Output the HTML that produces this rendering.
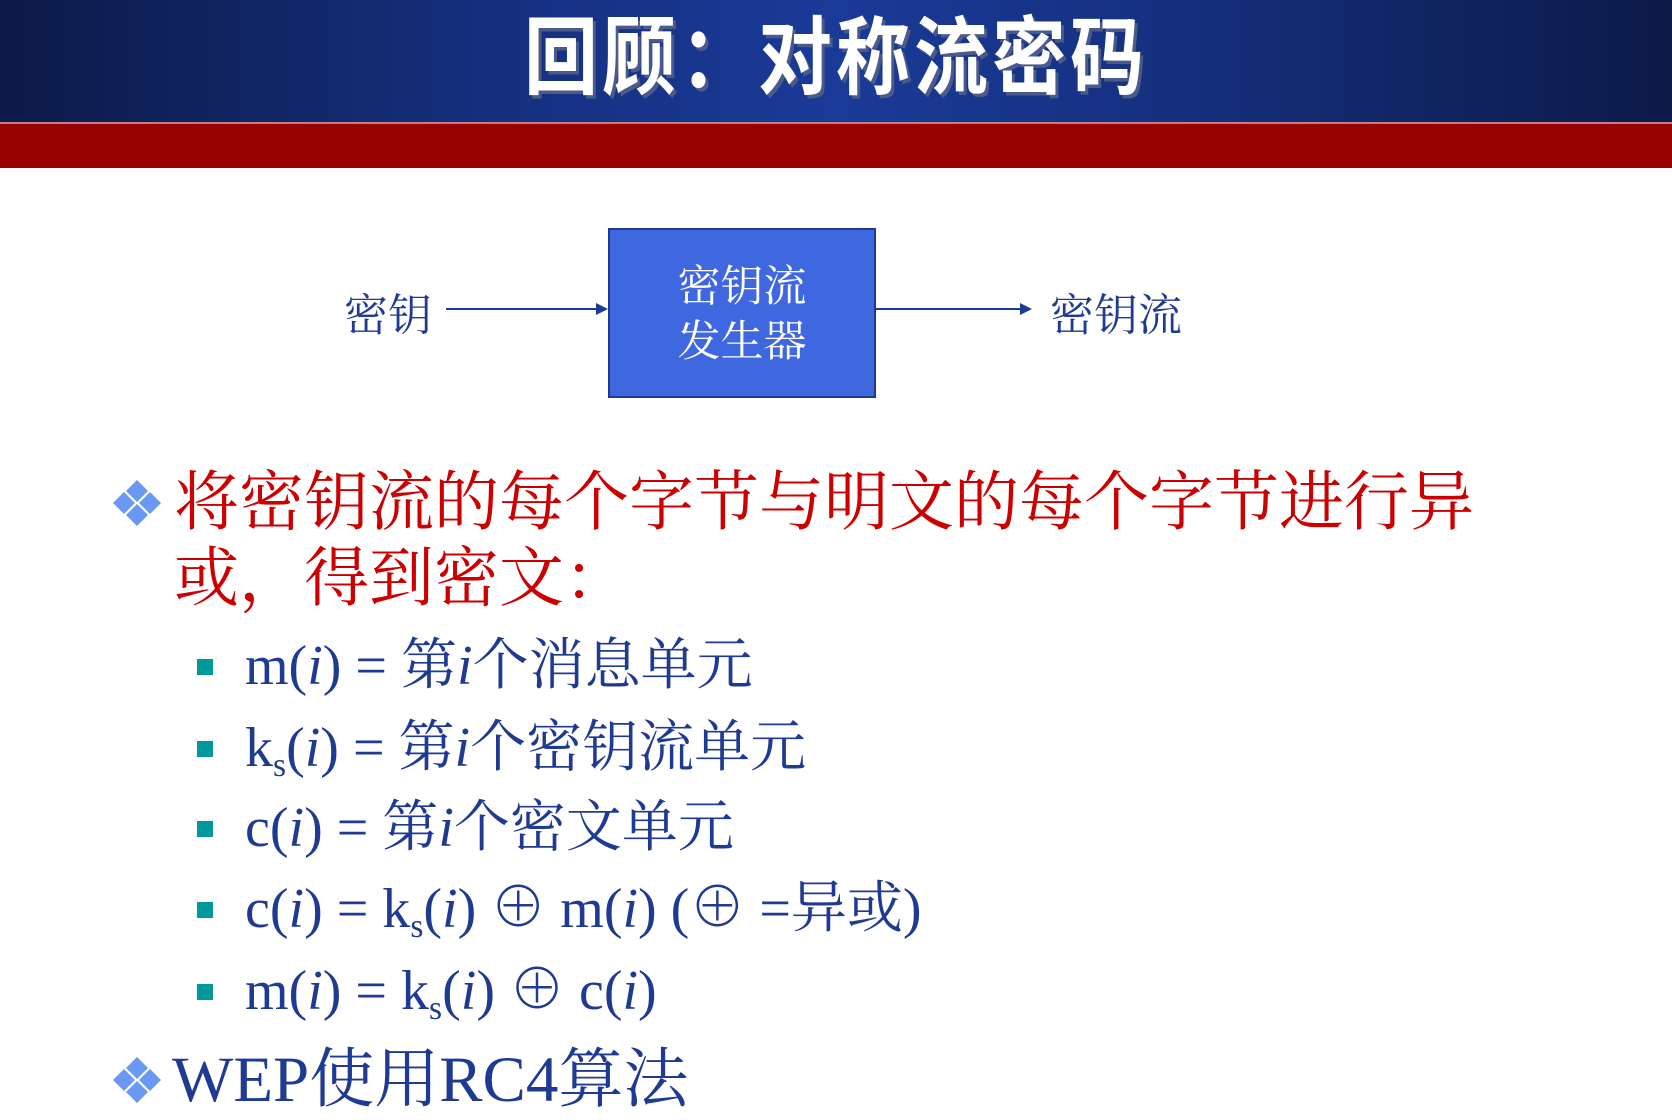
<!DOCTYPE html>
<html><head><meta charset="utf-8"><style>
html,body{margin:0;padding:0;}
body{width:1672px;height:1120px;position:relative;overflow:hidden;background:#fff;font-family:"Liberation Serif","Noto Serif CJK SC",serif;}
.hdr{position:absolute;left:0;top:0;width:1672px;height:122px;background:linear-gradient(90deg,#0c1a48 0%,#16307f 30%,#1a3a98 50%,#16307f 70%,#0c1a48 100%);}
.title{position:absolute;left:0;width:1672px;top:2px;text-align:center;color:#fff;font-size:74px;font-weight:bold;font-family:"Noto Sans CJK SC","WenQuanYi Zen Hei",sans-serif;line-height:100px;text-shadow:3px 3px 0 #4a5a8a;letter-spacing:4px;transform:scaleY(1.15);transform-origin:50% 50%;}
.red{position:absolute;left:0;top:122px;width:1672px;height:46px;background:#990000;border-top:2px solid #c08080;box-sizing:border-box;}
.box{position:absolute;left:608px;top:228px;width:268px;height:170px;background:#3f68e0;border:2px solid #1d3a90;box-sizing:border-box;color:#fff;text-align:center;font-size:43px;line-height:55px;}
.lbl{position:absolute;color:#1f3a93;font-size:44px;line-height:50px;font-family:"Noto Serif CJK SC",serif;}
.t{position:absolute;white-space:nowrap;}
.rt{color:#cc0000;font-size:65px;line-height:76px;left:174px;top:465px;}
.bl{color:#1f3a93;font-size:56px;line-height:60px;left:245px;}
.sq{position:absolute;left:197px;width:16px;height:16px;background:#009999;}
.wep{color:#1f3a93;font-size:65px;line-height:70px;left:172px;top:1045px;}
sub{font-size:0.6em;vertical-align:-0.3em;line-height:0;}
</style></head><body>
<div class="hdr"><div class="title">回顾：对称流密码</div></div>
<div class="red"></div>

<div class="lbl" style="left:344px;top:286px;">密钥</div>
<svg style="position:absolute;left:440px;top:300px" width="600" height="20">
<line x1="6" y1="9" x2="160" y2="9" stroke="#1f3a93" stroke-width="2"/>
<polygon points="168,9 156,3 156,15" fill="#1f3a93"/>
<line x1="436" y1="9" x2="584" y2="9" stroke="#1f3a93" stroke-width="2"/>
<polygon points="592,9 580,3 580,15" fill="#1f3a93"/>
</svg>
<div class="box"><div style="margin-top:30px">密钥流<br>发生器</div></div>
<div class="lbl" style="left:1050px;top:286px;">密钥流</div>

<svg style="position:absolute;left:112px;top:480px" width="50" height="46" viewBox="0 0 50 46">
<g fill="#6b98f5"><polygon points="25,0 36,11 25,22 14,11"/><polygon points="12,12 23,23 12,34 1,23"/><polygon points="38,12 49,23 38,34 27,23"/><polygon points="25,24 36,35 25,46 14,35"/></g>
</svg>
<div class="t rt">将密钥流的每个字节与明文的每个字节进行异<br>或，得到密文：</div>

<div class="sq" style="top:659px"></div>
<div class="t bl" style="top:636px">m(<i>i</i>) = 第<i>i</i>个消息单元</div>
<div class="sq" style="top:741px"></div>
<div class="t bl" style="top:718px">k<sub>s</sub>(<i>i</i>) = 第<i>i</i>个密钥流单元</div>
<div class="sq" style="top:821px"></div>
<div class="t bl" style="top:798px">c(<i>i</i>) = 第<i>i</i>个密文单元</div>
<div class="sq" style="top:902px"></div>
<div class="t bl" style="top:879px">c(<i>i</i>) = k<sub>s</sub>(<i>i</i>) ⊕ m(<i>i</i>) (⊕ =异或)</div>
<div class="sq" style="top:984px"></div>
<div class="t bl" style="top:961px">m(<i>i</i>) = k<sub>s</sub>(<i>i</i>) ⊕ c(<i>i</i>)</div>

<svg style="position:absolute;left:112px;top:1057px" width="50" height="46" viewBox="0 0 50 46">
<g fill="#6b98f5"><polygon points="25,0 36,11 25,22 14,11"/><polygon points="12,12 23,23 12,34 1,23"/><polygon points="38,12 49,23 38,34 27,23"/><polygon points="25,24 36,35 25,46 14,35"/></g>
</svg>
<div class="t wep">WEP使用RC4算法</div>
</body></html>
